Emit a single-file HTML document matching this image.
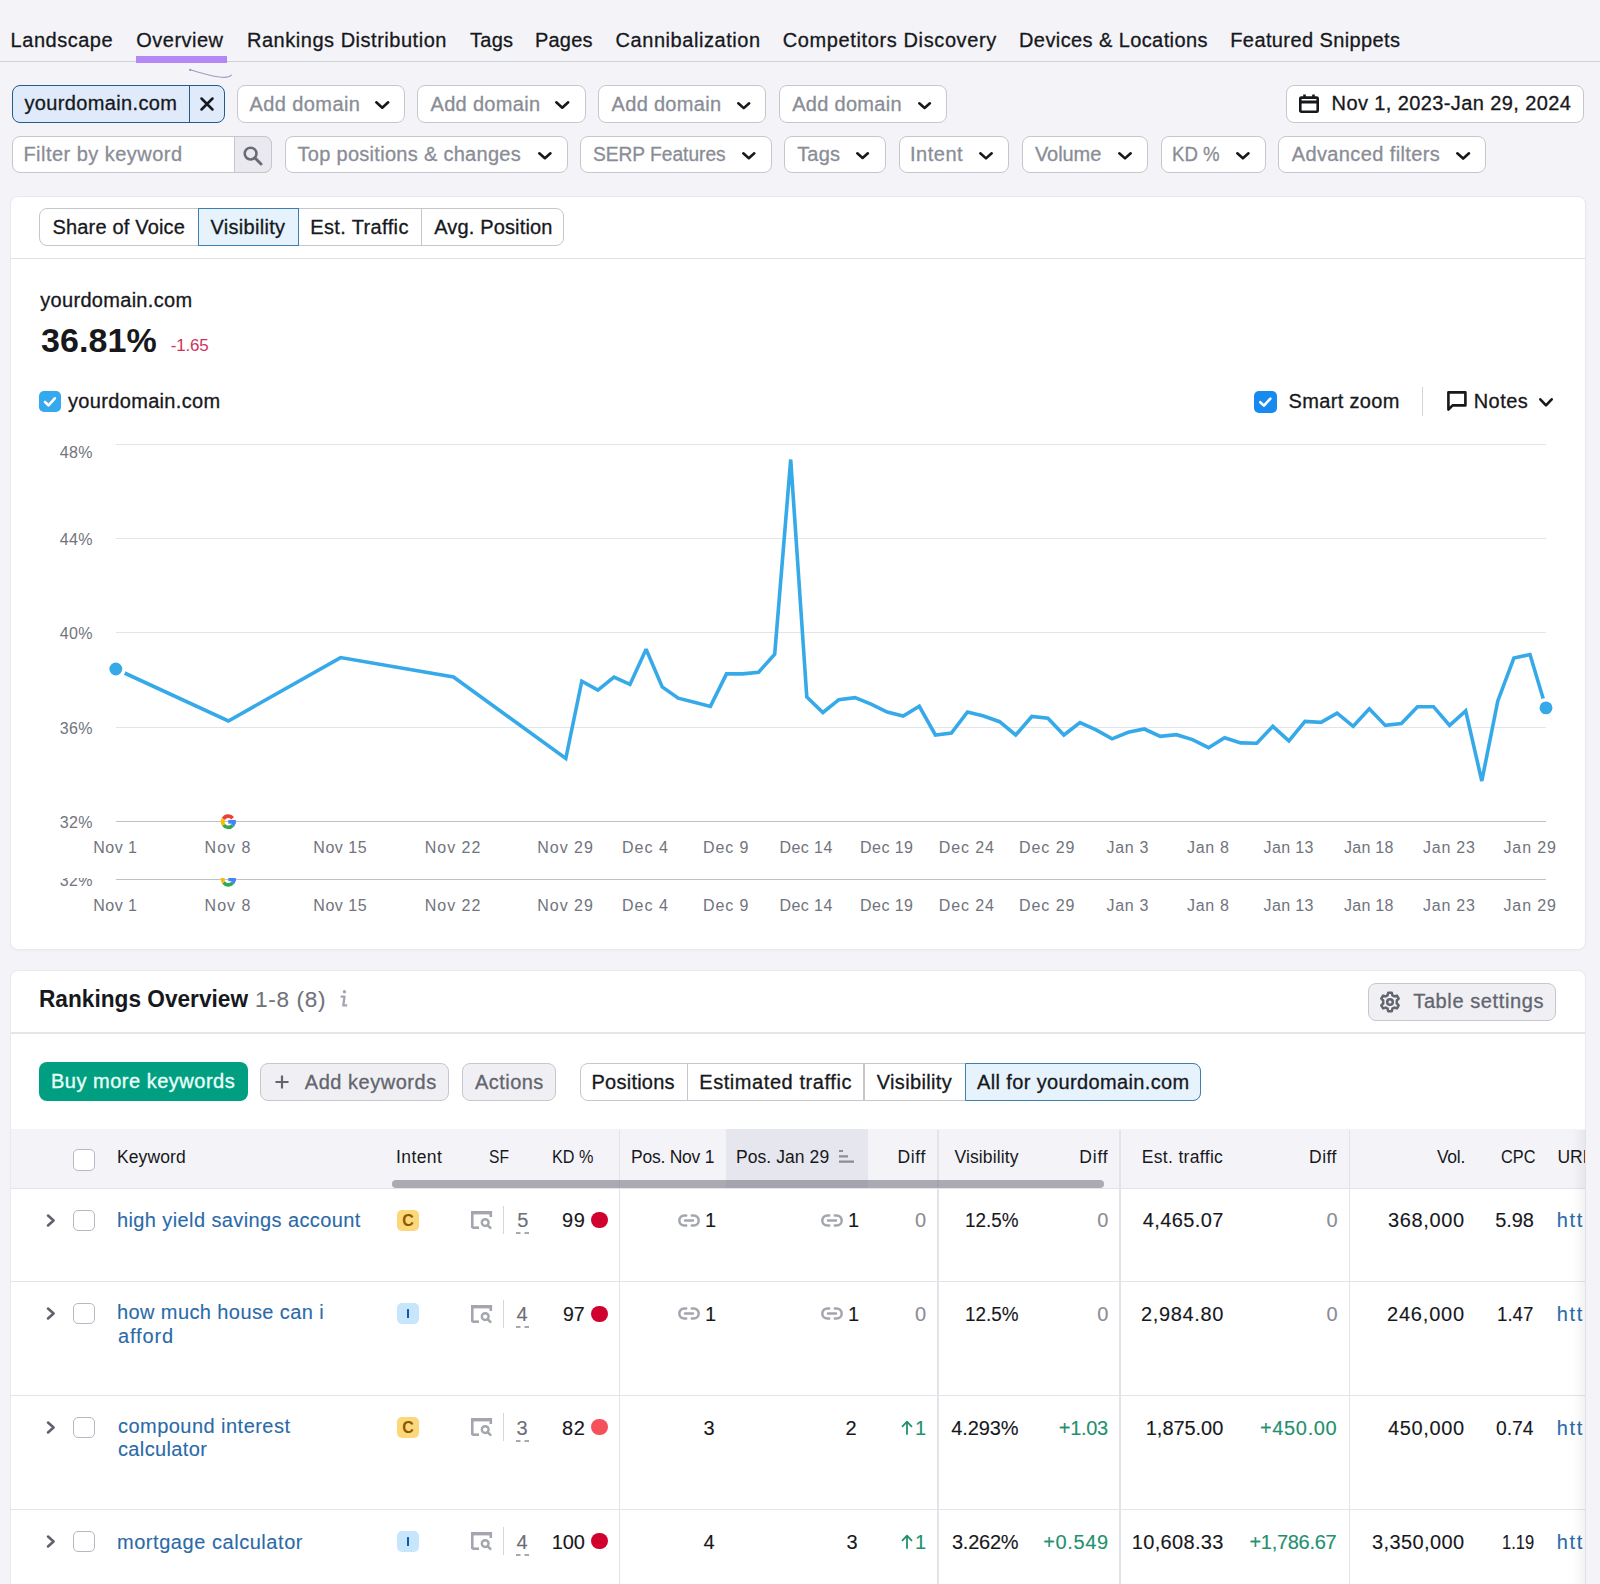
<!DOCTYPE html><html><head><meta charset="utf-8"><style>html,body{margin:0;padding:0;}</style></head><body style="position:relative;width:1600px;height:1584px;overflow:hidden;background:#f4f4f8;font-family:'Liberation Sans',sans-serif;"><div style="position:absolute;left:0.00px;top:60.50px;width:1600.00px;height:1.50px;box-sizing:border-box;background:#cfd1d8;"></div>
<div style="position:absolute;left:10.60px;top:30.30px;font-family:'Liberation Sans', sans-serif;font-size:20px;line-height:20px;font-weight:400;color:#17181c;white-space:nowrap;-webkit-text-stroke:0.3px #17181c;letter-spacing:0.520px;">Landscape</div>
<div style="position:absolute;left:136.30px;top:30.30px;font-family:'Liberation Sans', sans-serif;font-size:20px;line-height:20px;font-weight:400;color:#17181c;white-space:nowrap;-webkit-text-stroke:0.3px #17181c;letter-spacing:0.471px;">Overview</div>
<div style="position:absolute;left:247.00px;top:30.30px;font-family:'Liberation Sans', sans-serif;font-size:20px;line-height:20px;font-weight:400;color:#17181c;white-space:nowrap;-webkit-text-stroke:0.3px #17181c;letter-spacing:0.522px;">Rankings Distribution</div>
<div style="position:absolute;left:470.00px;top:30.30px;font-family:'Liberation Sans', sans-serif;font-size:20px;line-height:20px;font-weight:400;color:#17181c;white-space:nowrap;-webkit-text-stroke:0.3px #17181c;letter-spacing:0.251px;">Tags</div>
<div style="position:absolute;left:535.00px;top:30.30px;font-family:'Liberation Sans', sans-serif;font-size:20px;line-height:20px;font-weight:400;color:#17181c;white-space:nowrap;-webkit-text-stroke:0.3px #17181c;letter-spacing:0.198px;">Pages</div>
<div style="position:absolute;left:615.50px;top:30.30px;font-family:'Liberation Sans', sans-serif;font-size:20px;line-height:20px;font-weight:400;color:#17181c;white-space:nowrap;-webkit-text-stroke:0.3px #17181c;letter-spacing:0.562px;">Cannibalization</div>
<div style="position:absolute;left:782.75px;top:30.30px;font-family:'Liberation Sans', sans-serif;font-size:20px;line-height:20px;font-weight:400;color:#17181c;white-space:nowrap;-webkit-text-stroke:0.3px #17181c;letter-spacing:0.617px;">Competitors Discovery</div>
<div style="position:absolute;left:1019.00px;top:30.30px;font-family:'Liberation Sans', sans-serif;font-size:20px;line-height:20px;font-weight:400;color:#17181c;white-space:nowrap;-webkit-text-stroke:0.3px #17181c;letter-spacing:0.405px;">Devices &amp; Locations</div>
<div style="position:absolute;left:1230.25px;top:30.30px;font-family:'Liberation Sans', sans-serif;font-size:20px;line-height:20px;font-weight:400;color:#17181c;white-space:nowrap;-webkit-text-stroke:0.3px #17181c;letter-spacing:0.395px;">Featured Snippets</div>
<div style="position:absolute;left:136.00px;top:56.30px;width:90.60px;height:6.50px;box-sizing:border-box;background:#b387f5;"></div>
<svg style="position:absolute;left:0.00px;top:0.00px;overflow:visible;" width="1600" height="100" viewBox="0 0 1600 100"><path d="M190,69.8 C200,72.5 212,76.5 222,77.3 C227,77.6 230,76.8 231.4,75.2" fill="none" stroke="#a497c9" stroke-width="1.1" stroke-linecap="round"/><circle cx="190.2" cy="69.9" r="1.1" fill="#9a8fc0"/></svg>
<div style="position:absolute;left:11.50px;top:85.00px;width:213.00px;height:38.00px;box-sizing:border-box;background:#dfeafa;border:1.6px solid #245b8a;border-radius:8px;"></div>
<div style="position:absolute;left:188.80px;top:85.00px;width:1.60px;height:38.00px;box-sizing:border-box;background:#245b8a;"></div>
<div style="position:absolute;left:24.40px;top:92.60px;font-family:'Liberation Sans', sans-serif;font-size:20px;line-height:20px;font-weight:400;color:#17181c;white-space:nowrap;-webkit-text-stroke:0.3px #17181c;letter-spacing:0.359px;">yourdomain.com</div>
<svg style="position:absolute;left:199.70px;top:97.20px;overflow:visible;" width="14" height="14" viewBox="0 0 14 14"><path d="M1.5,1.5 L12.5,12.5 M12.5,1.5 L1.5,12.5" stroke="#17181c" stroke-width="2.5" stroke-linecap="round"/></svg>
<div style="position:absolute;left:236.50px;top:85.00px;width:168.00px;height:38.00px;box-sizing:border-box;background:#fff;border:1.5px solid #c6c7cc;border-radius:8px;"></div>
<div style="position:absolute;left:249.50px;top:93.50px;font-family:'Liberation Sans', sans-serif;font-size:20px;line-height:20px;font-weight:400;color:#8a8d96;white-space:nowrap;-webkit-text-stroke:0.3px #8a8d96;letter-spacing:0.404px;">Add domain</div>
<svg style="position:absolute;left:374.50px;top:101.41px;overflow:visible;" width="14.5" height="7.9750000000000005" viewBox="0 0 14.5 7.9750000000000005"><polyline points="1.30,1.30 7.25,6.68 13.20,1.30" fill="none" stroke="#17181c" stroke-width="2.6" stroke-linecap="round" stroke-linejoin="round"/></svg>
<div style="position:absolute;left:417.00px;top:85.00px;width:168.50px;height:38.00px;box-sizing:border-box;background:#fff;border:1.5px solid #c6c7cc;border-radius:8px;"></div>
<div style="position:absolute;left:430.50px;top:93.50px;font-family:'Liberation Sans', sans-serif;font-size:20px;line-height:20px;font-weight:400;color:#8a8d96;white-space:nowrap;-webkit-text-stroke:0.3px #8a8d96;letter-spacing:0.321px;">Add domain</div>
<svg style="position:absolute;left:555.00px;top:101.41px;overflow:visible;" width="14.5" height="7.9750000000000005" viewBox="0 0 14.5 7.9750000000000005"><polyline points="1.30,1.30 7.25,6.68 13.20,1.30" fill="none" stroke="#17181c" stroke-width="2.6" stroke-linecap="round" stroke-linejoin="round"/></svg>
<div style="position:absolute;left:598.00px;top:85.00px;width:168.30px;height:38.00px;box-sizing:border-box;background:#fff;border:1.5px solid #c6c7cc;border-radius:8px;"></div>
<div style="position:absolute;left:611.60px;top:93.50px;font-family:'Liberation Sans', sans-serif;font-size:20px;line-height:20px;font-weight:400;color:#8a8d96;white-space:nowrap;-webkit-text-stroke:0.3px #8a8d96;letter-spacing:0.298px;">Add domain</div>
<svg style="position:absolute;left:736.50px;top:101.69px;overflow:visible;" width="13.5" height="7.425000000000001" viewBox="0 0 13.5 7.425000000000001"><polyline points="1.30,1.30 6.75,6.13 12.20,1.30" fill="none" stroke="#17181c" stroke-width="2.6" stroke-linecap="round" stroke-linejoin="round"/></svg>
<div style="position:absolute;left:778.70px;top:85.00px;width:168.70px;height:38.00px;box-sizing:border-box;background:#fff;border:1.5px solid #c6c7cc;border-radius:8px;"></div>
<div style="position:absolute;left:792.20px;top:93.50px;font-family:'Liberation Sans', sans-serif;font-size:20px;line-height:20px;font-weight:400;color:#8a8d96;white-space:nowrap;-webkit-text-stroke:0.3px #8a8d96;letter-spacing:0.287px;">Add domain</div>
<svg style="position:absolute;left:917.60px;top:101.77px;overflow:visible;" width="13.199999999999932" height="7.259999999999963" viewBox="0 0 13.199999999999932 7.259999999999963"><polyline points="1.30,1.30 6.60,5.96 11.90,1.30" fill="none" stroke="#17181c" stroke-width="2.6" stroke-linecap="round" stroke-linejoin="round"/></svg>
<div style="position:absolute;left:1286.00px;top:85.20px;width:297.80px;height:37.40px;box-sizing:border-box;background:#fff;border:1.5px solid #c6c7cc;border-radius:8px;"></div>
<svg style="position:absolute;left:1299.00px;top:93.90px;overflow:visible;" width="20" height="19" viewBox="0 0 20 19"><rect x="1.3" y="3.6" width="17.4" height="14.1" rx="1" fill="none" stroke="#17181c" stroke-width="2.6"/><rect x="1.3" y="6.5" width="17.4" height="3" fill="#17181c"/><path d="M5.5,0.5 V4 M14.5,0.5 V4" stroke="#17181c" stroke-width="2.6"/></svg>
<div style="position:absolute;left:1331.60px;top:93.30px;font-family:'Liberation Sans', sans-serif;font-size:20px;line-height:20px;font-weight:400;color:#17181c;white-space:nowrap;-webkit-text-stroke:0.3px #17181c;letter-spacing:0.394px;">Nov 1, 2023-Jan 29, 2024</div>
<div style="position:absolute;left:11.50px;top:135.70px;width:260.50px;height:37.30px;box-sizing:border-box;background:#fff;border:1.5px solid #c6c7cc;border-radius:8px;"></div>
<div style="position:absolute;left:233.80px;top:135.70px;width:38.20px;height:37.30px;box-sizing:border-box;background:#e9e9ef;border:1.5px solid #c6c7cc;border-radius:0 8px 8px 0;"></div>
<div style="position:absolute;left:23.40px;top:144.00px;font-family:'Liberation Sans', sans-serif;font-size:20px;line-height:20px;font-weight:400;color:#8a8d96;white-space:nowrap;-webkit-text-stroke:0.3px #8a8d96;letter-spacing:0.473px;">Filter by keyword</div>
<svg style="position:absolute;left:243.20px;top:146.00px;overflow:visible;" width="20" height="19" viewBox="0 0 20 19"><circle cx="7.6" cy="7.6" r="5.9" fill="none" stroke="#6a6d77" stroke-width="2.6"/><path d="M11.8,11.8 L18,18" stroke="#6a6d77" stroke-width="3" stroke-linecap="round"/></svg>
<div style="position:absolute;left:284.50px;top:135.60px;width:283.00px;height:37.40px;box-sizing:border-box;background:#fff;border:1.5px solid #c6c7cc;border-radius:8px;"></div>
<div style="position:absolute;left:297.50px;top:144.30px;font-family:'Liberation Sans', sans-serif;font-size:20px;line-height:20px;font-weight:400;color:#8a8d96;white-space:nowrap;-webkit-text-stroke:0.3px #8a8d96;letter-spacing:0.293px;">Top positions &amp; changes</div>
<svg style="position:absolute;left:537.50px;top:152.22px;overflow:visible;" width="13.75" height="7.562500000000001" viewBox="0 0 13.75 7.562500000000001"><polyline points="1.30,1.30 6.88,6.26 12.45,1.30" fill="none" stroke="#17181c" stroke-width="2.6" stroke-linecap="round" stroke-linejoin="round"/></svg>
<div style="position:absolute;left:579.80px;top:135.60px;width:192.20px;height:37.40px;box-sizing:border-box;background:#fff;border:1.5px solid #c6c7cc;border-radius:8px;"></div>
<div style="position:absolute;left:592.50px;top:144.30px;font-family:'Liberation Sans', sans-serif;font-size:20px;line-height:20px;font-weight:400;color:#8a8d96;white-space:nowrap;-webkit-text-stroke:0.3px #8a8d96;transform:scaleX(0.9572);transform-origin:0 0;">SERP Features</div>
<svg style="position:absolute;left:742.00px;top:152.26px;overflow:visible;" width="13.600000000000023" height="7.480000000000013" viewBox="0 0 13.600000000000023 7.480000000000013"><polyline points="1.30,1.30 6.80,6.18 12.30,1.30" fill="none" stroke="#17181c" stroke-width="2.6" stroke-linecap="round" stroke-linejoin="round"/></svg>
<div style="position:absolute;left:784.30px;top:135.60px;width:101.70px;height:37.40px;box-sizing:border-box;background:#fff;border:1.5px solid #c6c7cc;border-radius:8px;"></div>
<div style="position:absolute;left:797.20px;top:144.30px;font-family:'Liberation Sans', sans-serif;font-size:20px;line-height:20px;font-weight:400;color:#8a8d96;white-space:nowrap;-webkit-text-stroke:0.3px #8a8d96;letter-spacing:0.185px;">Tags</div>
<svg style="position:absolute;left:856.30px;top:152.37px;overflow:visible;" width="13.200000000000045" height="7.2600000000000255" viewBox="0 0 13.200000000000045 7.2600000000000255"><polyline points="1.30,1.30 6.60,5.96 11.90,1.30" fill="none" stroke="#17181c" stroke-width="2.6" stroke-linecap="round" stroke-linejoin="round"/></svg>
<div style="position:absolute;left:898.50px;top:135.60px;width:110.80px;height:37.40px;box-sizing:border-box;background:#fff;border:1.5px solid #c6c7cc;border-radius:8px;"></div>
<div style="position:absolute;left:910.00px;top:144.30px;font-family:'Liberation Sans', sans-serif;font-size:20px;line-height:20px;font-weight:400;color:#8a8d96;white-space:nowrap;-webkit-text-stroke:0.3px #8a8d96;letter-spacing:0.524px;">Intent</div>
<svg style="position:absolute;left:979.20px;top:152.15px;overflow:visible;" width="14.0" height="7.700000000000001" viewBox="0 0 14.0 7.700000000000001"><polyline points="1.30,1.30 7.00,6.40 12.70,1.30" fill="none" stroke="#17181c" stroke-width="2.6" stroke-linecap="round" stroke-linejoin="round"/></svg>
<div style="position:absolute;left:1021.70px;top:135.60px;width:126.00px;height:37.40px;box-sizing:border-box;background:#fff;border:1.5px solid #c6c7cc;border-radius:8px;"></div>
<div style="position:absolute;left:1034.90px;top:144.30px;font-family:'Liberation Sans', sans-serif;font-size:20px;line-height:20px;font-weight:400;color:#8a8d96;white-space:nowrap;-webkit-text-stroke:0.3px #8a8d96;letter-spacing:-0.057px;">Volume</div>
<svg style="position:absolute;left:1118.00px;top:152.15px;overflow:visible;" width="14" height="7.700000000000001" viewBox="0 0 14 7.700000000000001"><polyline points="1.30,1.30 7.00,6.40 12.70,1.30" fill="none" stroke="#17181c" stroke-width="2.6" stroke-linecap="round" stroke-linejoin="round"/></svg>
<div style="position:absolute;left:1160.50px;top:135.60px;width:105.30px;height:37.40px;box-sizing:border-box;background:#fff;border:1.5px solid #c6c7cc;border-radius:8px;"></div>
<div style="position:absolute;left:1171.57px;top:144.30px;font-family:'Liberation Sans', sans-serif;font-size:20px;line-height:20px;font-weight:400;color:#8a8d96;white-space:nowrap;-webkit-text-stroke:0.3px #8a8d96;transform:scaleX(0.9317);transform-origin:0 0;">KD %</div>
<svg style="position:absolute;left:1236.20px;top:152.21px;overflow:visible;" width="13.799999999999955" height="7.589999999999976" viewBox="0 0 13.799999999999955 7.589999999999976"><polyline points="1.30,1.30 6.90,6.29 12.50,1.30" fill="none" stroke="#17181c" stroke-width="2.6" stroke-linecap="round" stroke-linejoin="round"/></svg>
<div style="position:absolute;left:1278.00px;top:135.60px;width:208.00px;height:37.40px;box-sizing:border-box;background:#fff;border:1.5px solid #c6c7cc;border-radius:8px;"></div>
<div style="position:absolute;left:1291.70px;top:144.30px;font-family:'Liberation Sans', sans-serif;font-size:20px;line-height:20px;font-weight:400;color:#8a8d96;white-space:nowrap;-webkit-text-stroke:0.3px #8a8d96;letter-spacing:0.387px;">Advanced filters</div>
<svg style="position:absolute;left:1456.30px;top:152.07px;overflow:visible;" width="14.299999999999955" height="7.864999999999975" viewBox="0 0 14.299999999999955 7.864999999999975"><polyline points="1.30,1.30 7.15,6.56 13.00,1.30" fill="none" stroke="#17181c" stroke-width="2.6" stroke-linecap="round" stroke-linejoin="round"/></svg>
<div style="position:absolute;left:11.00px;top:196.90px;width:1573.80px;height:751.80px;box-sizing:border-box;background:#fff;border-radius:7px;box-shadow:0 0 0 1px #e9eaef, 0 1px 3px rgba(0,0,0,0.06);"></div>
<div style="position:absolute;left:11.00px;top:257.70px;width:1573.80px;height:1.40px;box-sizing:border-box;background:#dfe0e5;"></div>
<div style="position:absolute;left:39.40px;top:208.00px;width:524.40px;height:38.00px;box-sizing:border-box;background:#fff;border:1.5px solid #c6c7cc;border-radius:8px;"></div>
<div style="position:absolute;left:421.00px;top:208.00px;width:1.30px;height:38.00px;box-sizing:border-box;background:#c6c7cc;"></div>
<div style="position:absolute;left:197.50px;top:208.00px;width:101.30px;height:38.00px;box-sizing:border-box;background:#e6f3fd;border:1.6px solid #3d7fae;"></div>
<div style="position:absolute;left:52.50px;top:217.00px;font-family:'Liberation Sans', sans-serif;font-size:20px;line-height:20px;font-weight:400;color:#17181c;white-space:nowrap;-webkit-text-stroke:0.3px #17181c;letter-spacing:0.176px;">Share of Voice</div>
<div style="position:absolute;left:210.50px;top:216.80px;font-family:'Liberation Sans', sans-serif;font-size:20px;line-height:20px;font-weight:400;color:#17181c;white-space:nowrap;-webkit-text-stroke:0.3px #17181c;letter-spacing:0.292px;">Visibility</div>
<div style="position:absolute;left:310.25px;top:216.80px;font-family:'Liberation Sans', sans-serif;font-size:20px;line-height:20px;font-weight:400;color:#17181c;white-space:nowrap;-webkit-text-stroke:0.3px #17181c;letter-spacing:0.367px;">Est. Traffic</div>
<div style="position:absolute;left:434.25px;top:216.80px;font-family:'Liberation Sans', sans-serif;font-size:20px;line-height:20px;font-weight:400;color:#17181c;white-space:nowrap;-webkit-text-stroke:0.3px #17181c;letter-spacing:0.146px;">Avg. Position</div>
<div style="position:absolute;left:40.25px;top:290.20px;font-family:'Liberation Sans', sans-serif;font-size:20px;line-height:20px;font-weight:400;color:#17181c;white-space:nowrap;-webkit-text-stroke:0.3px #17181c;letter-spacing:0.305px;">yourdomain.com</div>
<div style="position:absolute;left:41.00px;top:322.80px;font-family:'Liberation Sans', sans-serif;font-size:34px;line-height:34px;font-weight:700;color:#17181c;white-space:nowrap;letter-spacing:0.083px;">36.81%</div>
<div style="position:absolute;left:170.75px;top:337.00px;font-family:'Liberation Sans', sans-serif;font-size:17px;line-height:17px;font-weight:400;color:#d0335a;white-space:nowrap;letter-spacing:-0.198px;">-1.65</div>
<div style="position:absolute;left:39.20px;top:391.20px;width:21.60px;height:21.00px;box-sizing:border-box;background:#35a9ef;border-radius:5px;"></div>
<svg style="position:absolute;left:39.20px;top:391.20px;overflow:visible;" width="21.6" height="21" viewBox="0 0 21.6 21"><polyline points="6,11 9.5,14.3 15.8,7.3" fill="none" stroke="#fff" stroke-width="2.6" stroke-linecap="round" stroke-linejoin="round"/></svg>
<div style="position:absolute;left:68.00px;top:390.70px;font-family:'Liberation Sans', sans-serif;font-size:20px;line-height:20px;font-weight:400;color:#17181c;white-space:nowrap;-webkit-text-stroke:0.3px #17181c;letter-spacing:0.332px;">yourdomain.com</div>
<div style="position:absolute;left:1254.00px;top:391.10px;width:22.70px;height:21.60px;box-sizing:border-box;background:#178af0;border-radius:5px;"></div>
<svg style="position:absolute;left:1254.00px;top:391.10px;overflow:visible;" width="22.7" height="21.6" viewBox="0 0 22.7 21.6"><polyline points="6.3,11.2 9.9,14.6 16.4,7.6" fill="none" stroke="#fff" stroke-width="2.6" stroke-linecap="round" stroke-linejoin="round"/></svg>
<div style="position:absolute;left:1288.50px;top:391.00px;font-family:'Liberation Sans', sans-serif;font-size:20px;line-height:20px;font-weight:400;color:#17181c;white-space:nowrap;-webkit-text-stroke:0.3px #17181c;letter-spacing:0.351px;">Smart zoom</div>
<div style="position:absolute;left:1422.00px;top:387.40px;width:1.30px;height:28.90px;box-sizing:border-box;background:#d4d6dc;"></div>
<svg style="position:absolute;left:1446.90px;top:391.00px;overflow:visible;" width="20" height="20" viewBox="0 0 20 20"><path d="M1.4,18.6 V1.4 H18.4 V14.4 H5.6 Z" fill="none" stroke="#17181c" stroke-width="2.6" stroke-linejoin="round"/></svg>
<div style="position:absolute;left:1473.70px;top:391.00px;font-family:'Liberation Sans', sans-serif;font-size:20px;line-height:20px;font-weight:400;color:#17181c;white-space:nowrap;-webkit-text-stroke:0.3px #17181c;letter-spacing:0.451px;">Notes</div>
<svg style="position:absolute;left:1538.70px;top:398.10px;overflow:visible;" width="14" height="9" viewBox="0 0 14 9"><polyline points="1.3,1.3 7,7.4 12.7,1.3" fill="none" stroke="#17181c" stroke-width="2.6" stroke-linecap="round" stroke-linejoin="round"/></svg>
<div style="position:absolute;left:116px;top:443.8px;width:1430px;height:1.3px;background:#e3e4ea;"></div>
<div style="position:absolute;left:59.80px;top:445.30px;font-family:'Liberation Sans', sans-serif;font-size:16px;line-height:16px;font-weight:400;color:#71747d;white-space:nowrap;letter-spacing:0.352px;">48%</div>
<div style="position:absolute;left:116px;top:538.0px;width:1430px;height:1.3px;background:#e3e4ea;"></div>
<div style="position:absolute;left:59.80px;top:532.20px;font-family:'Liberation Sans', sans-serif;font-size:16px;line-height:16px;font-weight:400;color:#71747d;white-space:nowrap;letter-spacing:0.352px;">44%</div>
<div style="position:absolute;left:116px;top:632.2px;width:1430px;height:1.3px;background:#e3e4ea;"></div>
<div style="position:absolute;left:59.80px;top:626.40px;font-family:'Liberation Sans', sans-serif;font-size:16px;line-height:16px;font-weight:400;color:#71747d;white-space:nowrap;letter-spacing:0.352px;">40%</div>
<div style="position:absolute;left:116px;top:726.5px;width:1430px;height:1.3px;background:#e3e4ea;"></div>
<div style="position:absolute;left:59.80px;top:720.60px;font-family:'Liberation Sans', sans-serif;font-size:16px;line-height:16px;font-weight:400;color:#71747d;white-space:nowrap;letter-spacing:0.352px;">36%</div>
<div style="position:absolute;left:116px;top:821px;width:1430px;height:1.4px;background:#bfc1c8;"></div>
<div style="position:absolute;left:59.80px;top:815.00px;font-family:'Liberation Sans', sans-serif;font-size:16px;line-height:16px;font-weight:400;color:#71747d;white-space:nowrap;letter-spacing:0.352px;">32%</div>
<svg style="position:absolute;left:0;top:0;overflow:visible" width="1600" height="1584"><path d="M232.61,818.18 A5.62,5.62 0 0 0 223.43,818.99" fill="none" stroke="#ea4335" stroke-width="3.75"/><path d="M223.43,818.99 A5.62,5.62 0 0 0 223.69,825.03" fill="none" stroke="#fbbc05" stroke-width="3.75"/><path d="M223.69,825.03 A5.62,5.62 0 0 0 232.61,825.42" fill="none" stroke="#34a853" stroke-width="3.75"/><path d="M232.61,825.42 A5.62,5.62 0 0 0 233.93,821.80" fill="none" stroke="#4285f4" stroke-width="3.75"/><rect x="228.30" y="819.92" width="7.50" height="3.75" fill="#4285f4"/></svg>
<div style="position:absolute;left:93.25px;top:840.30px;font-family:'Liberation Sans', sans-serif;font-size:16px;line-height:16px;font-weight:400;color:#71747d;white-space:nowrap;letter-spacing:0.463px;">Nov 1</div>
<div style="position:absolute;left:204.60px;top:840.30px;font-family:'Liberation Sans', sans-serif;font-size:16px;line-height:16px;font-weight:400;color:#71747d;white-space:nowrap;letter-spacing:1.025px;">Nov 8</div>
<div style="position:absolute;left:313.30px;top:840.30px;font-family:'Liberation Sans', sans-serif;font-size:16px;line-height:16px;font-weight:400;color:#71747d;white-space:nowrap;letter-spacing:0.541px;">Nov 15</div>
<div style="position:absolute;left:424.70px;top:840.30px;font-family:'Liberation Sans', sans-serif;font-size:16px;line-height:16px;font-weight:400;color:#71747d;white-space:nowrap;letter-spacing:1.001px;">Nov 22</div>
<div style="position:absolute;left:537.20px;top:840.30px;font-family:'Liberation Sans', sans-serif;font-size:16px;line-height:16px;font-weight:400;color:#71747d;white-space:nowrap;letter-spacing:1.001px;">Nov 29</div>
<div style="position:absolute;left:622.00px;top:840.30px;font-family:'Liberation Sans', sans-serif;font-size:16px;line-height:16px;font-weight:400;color:#71747d;white-space:nowrap;letter-spacing:1.025px;">Dec 4</div>
<div style="position:absolute;left:703.00px;top:840.30px;font-family:'Liberation Sans', sans-serif;font-size:16px;line-height:16px;font-weight:400;color:#71747d;white-space:nowrap;letter-spacing:0.875px;">Dec 9</div>
<div style="position:absolute;left:779.50px;top:840.30px;font-family:'Liberation Sans', sans-serif;font-size:16px;line-height:16px;font-weight:400;color:#71747d;white-space:nowrap;letter-spacing:0.421px;">Dec 14</div>
<div style="position:absolute;left:860.00px;top:840.30px;font-family:'Liberation Sans', sans-serif;font-size:16px;line-height:16px;font-weight:400;color:#71747d;white-space:nowrap;letter-spacing:0.461px;">Dec 19</div>
<div style="position:absolute;left:938.80px;top:840.30px;font-family:'Liberation Sans', sans-serif;font-size:16px;line-height:16px;font-weight:400;color:#71747d;white-space:nowrap;letter-spacing:0.901px;">Dec 24</div>
<div style="position:absolute;left:1018.90px;top:840.30px;font-family:'Liberation Sans', sans-serif;font-size:16px;line-height:16px;font-weight:400;color:#71747d;white-space:nowrap;letter-spacing:0.961px;">Dec 29</div>
<div style="position:absolute;left:1106.60px;top:840.30px;font-family:'Liberation Sans', sans-serif;font-size:16px;line-height:16px;font-weight:400;color:#71747d;white-space:nowrap;letter-spacing:0.689px;">Jan 3</div>
<div style="position:absolute;left:1187.00px;top:840.30px;font-family:'Liberation Sans', sans-serif;font-size:16px;line-height:16px;font-weight:400;color:#71747d;white-space:nowrap;letter-spacing:0.689px;">Jan 8</div>
<div style="position:absolute;left:1263.50px;top:840.30px;font-family:'Liberation Sans', sans-serif;font-size:16px;line-height:16px;font-weight:400;color:#71747d;white-space:nowrap;letter-spacing:0.392px;">Jan 13</div>
<div style="position:absolute;left:1344.00px;top:840.30px;font-family:'Liberation Sans', sans-serif;font-size:16px;line-height:16px;font-weight:400;color:#71747d;white-space:nowrap;letter-spacing:0.252px;">Jan 18</div>
<div style="position:absolute;left:1423.10px;top:840.30px;font-family:'Liberation Sans', sans-serif;font-size:16px;line-height:16px;font-weight:400;color:#71747d;white-space:nowrap;letter-spacing:0.752px;">Jan 23</div>
<div style="position:absolute;left:1503.50px;top:840.30px;font-family:'Liberation Sans', sans-serif;font-size:16px;line-height:16px;font-weight:400;color:#71747d;white-space:nowrap;letter-spacing:0.872px;">Jan 29</div>
<div style="position:absolute;left:0;top:877.5px;width:1600px;height:70px;overflow:hidden;"><div style="position:absolute;left:0;top:-877.5px;width:1600px;height:1584px;">
<div style="position:absolute;left:116px;top:878.5px;width:1430px;height:1.4px;background:#bfc1c8;"></div>
<div style="position:absolute;left:59.80px;top:872.50px;font-family:'Liberation Sans', sans-serif;font-size:16px;line-height:16px;font-weight:400;color:#71747d;white-space:nowrap;letter-spacing:0.352px;">32%</div>
<svg style="position:absolute;left:0;top:0;overflow:visible" width="1600" height="1584"><path d="M232.61,875.68 A5.62,5.62 0 0 0 223.43,876.49" fill="none" stroke="#ea4335" stroke-width="3.75"/><path d="M223.43,876.49 A5.62,5.62 0 0 0 223.69,882.53" fill="none" stroke="#fbbc05" stroke-width="3.75"/><path d="M223.69,882.53 A5.62,5.62 0 0 0 232.61,882.92" fill="none" stroke="#34a853" stroke-width="3.75"/><path d="M232.61,882.92 A5.62,5.62 0 0 0 233.93,879.30" fill="none" stroke="#4285f4" stroke-width="3.75"/><rect x="228.30" y="877.42" width="7.50" height="3.75" fill="#4285f4"/></svg>
<div style="position:absolute;left:93.25px;top:897.80px;font-family:'Liberation Sans', sans-serif;font-size:16px;line-height:16px;font-weight:400;color:#71747d;white-space:nowrap;letter-spacing:0.463px;">Nov 1</div>
<div style="position:absolute;left:204.60px;top:897.80px;font-family:'Liberation Sans', sans-serif;font-size:16px;line-height:16px;font-weight:400;color:#71747d;white-space:nowrap;letter-spacing:1.025px;">Nov 8</div>
<div style="position:absolute;left:313.30px;top:897.80px;font-family:'Liberation Sans', sans-serif;font-size:16px;line-height:16px;font-weight:400;color:#71747d;white-space:nowrap;letter-spacing:0.541px;">Nov 15</div>
<div style="position:absolute;left:424.70px;top:897.80px;font-family:'Liberation Sans', sans-serif;font-size:16px;line-height:16px;font-weight:400;color:#71747d;white-space:nowrap;letter-spacing:1.001px;">Nov 22</div>
<div style="position:absolute;left:537.20px;top:897.80px;font-family:'Liberation Sans', sans-serif;font-size:16px;line-height:16px;font-weight:400;color:#71747d;white-space:nowrap;letter-spacing:1.001px;">Nov 29</div>
<div style="position:absolute;left:622.00px;top:897.80px;font-family:'Liberation Sans', sans-serif;font-size:16px;line-height:16px;font-weight:400;color:#71747d;white-space:nowrap;letter-spacing:1.025px;">Dec 4</div>
<div style="position:absolute;left:703.00px;top:897.80px;font-family:'Liberation Sans', sans-serif;font-size:16px;line-height:16px;font-weight:400;color:#71747d;white-space:nowrap;letter-spacing:0.875px;">Dec 9</div>
<div style="position:absolute;left:779.50px;top:897.80px;font-family:'Liberation Sans', sans-serif;font-size:16px;line-height:16px;font-weight:400;color:#71747d;white-space:nowrap;letter-spacing:0.421px;">Dec 14</div>
<div style="position:absolute;left:860.00px;top:897.80px;font-family:'Liberation Sans', sans-serif;font-size:16px;line-height:16px;font-weight:400;color:#71747d;white-space:nowrap;letter-spacing:0.461px;">Dec 19</div>
<div style="position:absolute;left:938.80px;top:897.80px;font-family:'Liberation Sans', sans-serif;font-size:16px;line-height:16px;font-weight:400;color:#71747d;white-space:nowrap;letter-spacing:0.901px;">Dec 24</div>
<div style="position:absolute;left:1018.90px;top:897.80px;font-family:'Liberation Sans', sans-serif;font-size:16px;line-height:16px;font-weight:400;color:#71747d;white-space:nowrap;letter-spacing:0.961px;">Dec 29</div>
<div style="position:absolute;left:1106.60px;top:897.80px;font-family:'Liberation Sans', sans-serif;font-size:16px;line-height:16px;font-weight:400;color:#71747d;white-space:nowrap;letter-spacing:0.689px;">Jan 3</div>
<div style="position:absolute;left:1187.00px;top:897.80px;font-family:'Liberation Sans', sans-serif;font-size:16px;line-height:16px;font-weight:400;color:#71747d;white-space:nowrap;letter-spacing:0.689px;">Jan 8</div>
<div style="position:absolute;left:1263.50px;top:897.80px;font-family:'Liberation Sans', sans-serif;font-size:16px;line-height:16px;font-weight:400;color:#71747d;white-space:nowrap;letter-spacing:0.392px;">Jan 13</div>
<div style="position:absolute;left:1344.00px;top:897.80px;font-family:'Liberation Sans', sans-serif;font-size:16px;line-height:16px;font-weight:400;color:#71747d;white-space:nowrap;letter-spacing:0.252px;">Jan 18</div>
<div style="position:absolute;left:1423.10px;top:897.80px;font-family:'Liberation Sans', sans-serif;font-size:16px;line-height:16px;font-weight:400;color:#71747d;white-space:nowrap;letter-spacing:0.752px;">Jan 23</div>
<div style="position:absolute;left:1503.50px;top:897.80px;font-family:'Liberation Sans', sans-serif;font-size:16px;line-height:16px;font-weight:400;color:#71747d;white-space:nowrap;letter-spacing:0.872px;">Jan 29</div>
</div></div>
<svg style="position:absolute;left:0.00px;top:0.00px;overflow:visible;" width="1600" height="1584" viewBox="0 0 1600 1584"><polyline points="115.8,669.0 228.4,721.0 340.6,657.6 453.5,677.0 565.8,758.5 581.8,681.2 597.9,690.1 614.0,677.1 630.0,684.4 646.1,649.2 662.2,686.9 678.2,698.2 694.3,702.3 710.4,706.4 726.5,673.9 742.5,673.9 758.6,672.2 774.7,654.2 790.7,459.5 806.8,697.0 822.9,712.5 838.9,699.7 855.0,697.7 871.1,704.2 887.2,712.0 903.2,716.0 919.3,706.3 935.4,735.0 951.4,733.1 967.5,712.0 983.6,716.0 999.6,721.7 1015.7,735.0 1031.8,716.5 1047.9,718.3 1063.9,735.0 1080.0,722.6 1096.1,729.9 1112.1,738.8 1128.2,732.3 1144.3,729.0 1160.3,736.4 1176.4,734.7 1192.5,739.6 1208.6,747.7 1224.6,737.7 1240.7,742.9 1256.8,743.2 1272.8,726.3 1288.9,740.8 1305.0,721.4 1321.0,722.4 1337.1,713.1 1353.2,726.3 1369.3,708.8 1385.3,725.4 1401.4,723.6 1417.5,706.7 1433.5,706.7 1449.6,725.4 1465.7,710.9 1481.8,781.0 1497.8,700.9 1513.9,658.0 1530.0,654.5 1546.0,707.9" fill="none" stroke="#36aae9" stroke-width="3.6" stroke-linejoin="miter" stroke-miterlimit="2"/><circle cx="115.8" cy="669" r="8.2" fill="#36aae9" stroke="#fff" stroke-width="3.5"/><circle cx="1546.0" cy="707.9" r="8.2" fill="#36aae9" stroke="#fff" stroke-width="3.5"/></svg>
<div style="position:absolute;left:11.00px;top:971.00px;width:1574.20px;height:629.00px;box-sizing:border-box;background:#fff;border-radius:7px 7px 0 0;box-shadow:0 0 0 1px #e9eaef, 0 1px 3px rgba(0,0,0,0.06);"></div>
<div style="position:absolute;left:11.00px;top:1032.40px;width:1574.00px;height:1.40px;box-sizing:border-box;background:#e4e5ea;"></div>
<div style="position:absolute;left:39.04px;top:988.00px;font-family:'Liberation Sans', sans-serif;font-size:23.5px;line-height:23.5px;font-weight:700;color:#17181c;white-space:nowrap;transform:scaleX(0.9641);transform-origin:0 0;">Rankings Overview</div>
<div style="position:absolute;left:255.00px;top:989.00px;font-family:'Liberation Sans', sans-serif;font-size:22.5px;line-height:22.5px;font-weight:400;color:#6f727b;white-space:nowrap;letter-spacing:0.704px;-webkit-text-stroke:0.1px #6f727b;">1-8 (8)</div>
<svg style="position:absolute;left:0.00px;top:0.00px;overflow:visible;" width="1600" height="1584" viewBox="0 0 1600 1584"><circle cx="344.4" cy="991.7" r="1.7" fill="#a3a6ae"/><path d="M340.6,996.6 H344.5 L343.3,1005.3 H347.2" fill="none" stroke="#a3a6ae" stroke-width="2.3" stroke-linejoin="round"/></svg>
<div style="position:absolute;left:1368.00px;top:983.00px;width:188.30px;height:38.00px;box-sizing:border-box;background:#f0f0f4;border:1.5px solid #c6c7cc;border-radius:8px;"></div>
<svg style="position:absolute;left:1378.60px;top:990.80px;overflow:visible;" width="22" height="22" viewBox="0 0 22 22"><g fill="none" stroke="#62656e" stroke-width="2.5"><circle cx="11" cy="11" r="2.8"/><path d="M9.2,1.8 H12.8 L13.4,4.3 L15.4,5.4 L17.9,4.6 L19.7,7.7 L17.8,9.5 V12.5 L19.7,14.3 L17.9,17.4 L15.4,16.6 L13.4,17.7 L12.8,20.2 H9.2 L8.6,17.7 L6.6,16.6 L4.1,17.4 L2.3,14.3 L4.2,12.5 V9.5 L2.3,7.7 L4.1,4.6 L6.6,5.4 L8.6,4.3 Z" stroke-linejoin="round"/></g></svg>
<div style="position:absolute;left:1413.30px;top:990.90px;font-family:'Liberation Sans', sans-serif;font-size:20px;line-height:20px;font-weight:400;color:#62656e;white-space:nowrap;-webkit-text-stroke:0.3px #62656e;letter-spacing:0.600px;">Table settings</div>
<div style="position:absolute;left:39.00px;top:1062.20px;width:208.50px;height:38.40px;box-sizing:border-box;background:#009f81;border-radius:8px;"></div>
<div style="position:absolute;left:51.00px;top:1071.40px;font-family:'Liberation Sans', sans-serif;font-size:20px;line-height:20px;font-weight:400;color:#e9fff8;white-space:nowrap;letter-spacing:0.508px;-webkit-text-stroke:0.35px #e9fff8;">Buy more keywords</div>
<div style="position:absolute;left:259.80px;top:1062.70px;width:189.20px;height:37.90px;box-sizing:border-box;background:#f0f0f4;border:1.5px solid #c6c7cc;border-radius:8px;"></div>
<svg style="position:absolute;left:274.70px;top:1074.50px;overflow:visible;" width="14" height="14" viewBox="0 0 14 14"><path d="M7,0.5 V13.5 M0.5,7 H13.5" stroke="#62656e" stroke-width="2.2"/></svg>
<div style="position:absolute;left:304.80px;top:1071.60px;font-family:'Liberation Sans', sans-serif;font-size:20px;line-height:20px;font-weight:400;color:#62656e;white-space:nowrap;-webkit-text-stroke:0.3px #62656e;letter-spacing:0.526px;">Add keywords</div>
<div style="position:absolute;left:461.50px;top:1062.70px;width:94.50px;height:37.90px;box-sizing:border-box;background:#f0f0f4;border:1.5px solid #c6c7cc;border-radius:8px;"></div>
<div style="position:absolute;left:475.00px;top:1071.60px;font-family:'Liberation Sans', sans-serif;font-size:20px;line-height:20px;font-weight:400;color:#62656e;white-space:nowrap;-webkit-text-stroke:0.3px #62656e;letter-spacing:0.452px;">Actions</div>
<div style="position:absolute;left:579.60px;top:1062.50px;width:621.80px;height:38.10px;box-sizing:border-box;background:#fff;border:1.5px solid #c6c7cc;border-radius:8px;"></div>
<div style="position:absolute;left:686.80px;top:1062.50px;width:1.30px;height:38.10px;box-sizing:border-box;background:#c6c7cc;"></div>
<div style="position:absolute;left:863.40px;top:1062.50px;width:1.30px;height:38.10px;box-sizing:border-box;background:#c6c7cc;"></div>
<div style="position:absolute;left:964.50px;top:1062.50px;width:236.90px;height:38.10px;box-sizing:border-box;background:#e6f3fd;border:1.6px solid #3d7fae;border-radius:0 8px 8px 0;"></div>
<div style="position:absolute;left:591.50px;top:1071.80px;font-family:'Liberation Sans', sans-serif;font-size:20px;line-height:20px;font-weight:400;color:#17181c;white-space:nowrap;-webkit-text-stroke:0.3px #17181c;letter-spacing:0.243px;">Positions</div>
<div style="position:absolute;left:699.25px;top:1071.80px;font-family:'Liberation Sans', sans-serif;font-size:20px;line-height:20px;font-weight:400;color:#17181c;white-space:nowrap;-webkit-text-stroke:0.3px #17181c;letter-spacing:0.571px;">Estimated traffic</div>
<div style="position:absolute;left:876.75px;top:1071.80px;font-family:'Liberation Sans', sans-serif;font-size:20px;line-height:20px;font-weight:400;color:#17181c;white-space:nowrap;-webkit-text-stroke:0.3px #17181c;letter-spacing:0.342px;">Visibility</div>
<div style="position:absolute;left:977.00px;top:1071.80px;font-family:'Liberation Sans', sans-serif;font-size:20px;line-height:20px;font-weight:400;color:#17181c;white-space:nowrap;-webkit-text-stroke:0.3px #17181c;letter-spacing:0.369px;">All for yourdomain.com</div>
<div style="position:absolute;left:11.00px;top:1129.20px;width:1574.00px;height:59.20px;box-sizing:border-box;background:#f4f4f8;"></div>
<div style="position:absolute;left:726.30px;top:1129.20px;width:141.70px;height:59.20px;box-sizing:border-box;background:#e6e6ee;"></div>
<div style="position:absolute;left:618.90px;top:1129.70px;width:1.20px;height:470.30px;box-sizing:border-box;background:#e3e4ea;"></div>
<div style="position:absolute;left:937.40px;top:1129.70px;width:1.20px;height:470.30px;box-sizing:border-box;background:#e3e4ea;"></div>
<div style="position:absolute;left:1119.40px;top:1129.70px;width:1.20px;height:470.30px;box-sizing:border-box;background:#e3e4ea;"></div>
<div style="position:absolute;left:1348.90px;top:1129.70px;width:1.20px;height:470.30px;box-sizing:border-box;background:#e3e4ea;"></div>
<div style="position:absolute;left:11.00px;top:1187.80px;width:1574.00px;height:1.20px;box-sizing:border-box;background:#e3e4ea;"></div>
<div style="position:absolute;left:73.30px;top:1149.30px;width:21.30px;height:21.30px;box-sizing:border-box;background:#fff;border:1.5px solid #b6b9c1;border-radius:5px;"></div>
<div style="position:absolute;left:117.00px;top:1149.00px;font-family:'Liberation Sans', sans-serif;font-size:17.5px;line-height:17.5px;font-weight:400;color:#17181c;white-space:nowrap;letter-spacing:0.108px;">Keyword</div>
<div style="position:absolute;left:396.00px;top:1149.00px;font-family:'Liberation Sans', sans-serif;font-size:17.5px;line-height:17.5px;font-weight:400;color:#17181c;white-space:nowrap;letter-spacing:0.416px;">Intent</div>
<div style="position:absolute;left:489.40px;top:1149.00px;font-family:'Liberation Sans', sans-serif;font-size:17.5px;line-height:17.5px;font-weight:400;color:#17181c;white-space:nowrap;transform:scaleX(0.8928);transform-origin:0 0;">SF</div>
<div style="position:absolute;left:551.57px;top:1149.00px;font-family:'Liberation Sans', sans-serif;font-size:17.5px;line-height:17.5px;font-weight:400;color:#17181c;white-space:nowrap;transform:scaleX(0.9265);transform-origin:0 0;">KD %</div>
<div style="position:absolute;left:631.00px;top:1149.00px;font-family:'Liberation Sans', sans-serif;font-size:17.5px;line-height:17.5px;font-weight:400;color:#17181c;white-space:nowrap;letter-spacing:-0.235px;">Pos. Nov 1</div>
<div style="position:absolute;left:736.00px;top:1149.00px;font-family:'Liberation Sans', sans-serif;font-size:17.5px;line-height:17.5px;font-weight:400;color:#17181c;white-space:nowrap;letter-spacing:0.071px;">Pos. Jan 29</div>
<div style="position:absolute;left:897.40px;top:1149.00px;font-family:'Liberation Sans', sans-serif;font-size:17.5px;line-height:17.5px;font-weight:400;color:#17181c;white-space:nowrap;letter-spacing:0.709px;">Diff</div>
<div style="position:absolute;left:954.40px;top:1149.00px;font-family:'Liberation Sans', sans-serif;font-size:17.5px;line-height:17.5px;font-weight:400;color:#17181c;white-space:nowrap;letter-spacing:0.134px;">Visibility</div>
<div style="position:absolute;left:1079.30px;top:1149.00px;font-family:'Liberation Sans', sans-serif;font-size:17.5px;line-height:17.5px;font-weight:400;color:#17181c;white-space:nowrap;letter-spacing:0.809px;">Diff</div>
<div style="position:absolute;left:1141.80px;top:1149.00px;font-family:'Liberation Sans', sans-serif;font-size:17.5px;line-height:17.5px;font-weight:400;color:#17181c;white-space:nowrap;letter-spacing:0.325px;">Est. traffic</div>
<div style="position:absolute;left:1309.00px;top:1149.00px;font-family:'Liberation Sans', sans-serif;font-size:17.5px;line-height:17.5px;font-weight:400;color:#17181c;white-space:nowrap;letter-spacing:0.509px;">Diff</div>
<div style="position:absolute;left:1436.90px;top:1149.00px;font-family:'Liberation Sans', sans-serif;font-size:17.5px;line-height:17.5px;font-weight:400;color:#17181c;white-space:nowrap;letter-spacing:-0.276px;">Vol.</div>
<div style="position:absolute;left:1500.60px;top:1149.00px;font-family:'Liberation Sans', sans-serif;font-size:17.5px;line-height:17.5px;font-weight:400;color:#17181c;white-space:nowrap;transform:scaleX(0.9309);transform-origin:0 0;">CPC</div>
<div style="position:absolute;left:1557.40px;top:1149.00px;font-family:'Liberation Sans', sans-serif;font-size:17.5px;line-height:17.5px;font-weight:400;color:#17181c;white-space:nowrap;">URL</div>
<svg style="position:absolute;left:837.80px;top:1148.50px;overflow:visible;" width="17" height="15" viewBox="0 0 17 15"><path d="M1,2 H5 M1,7.3 H10 M1,12.6 H16" stroke="#8a8d96" stroke-width="2.2"/></svg>
<div style="position:absolute;left:392.00px;top:1179.70px;width:712.00px;height:8.00px;box-sizing:border-box;background:rgba(118,120,132,0.6);border-radius:4px;"></div>
<svg style="position:absolute;left:45.80px;top:1213.70px;overflow:visible;" width="10" height="13" viewBox="0 0 10 13"><polyline points="2,1.6 7.6,6.5 2,11.4" fill="none" stroke="#5f626b" stroke-width="2.6" stroke-linecap="round" stroke-linejoin="round"/></svg>
<div style="position:absolute;left:73.30px;top:1209.60px;width:21.30px;height:21.30px;box-sizing:border-box;background:#fff;border:1.5px solid #b6b9c1;border-radius:5px;"></div>
<div style="position:absolute;left:117.00px;top:1210.40px;font-family:'Liberation Sans', sans-serif;font-size:20px;line-height:20px;font-weight:400;color:#2a6aa9;white-space:nowrap;-webkit-text-stroke:0.12px #2a6aa9;letter-spacing:0.395px;">high yield savings account</div>
<div style="position:absolute;left:397.00px;top:1209.70px;width:22.00px;height:21.00px;box-sizing:border-box;background:#fcd87a;border-radius:5px;"></div>
<div style="position:absolute;left:402.30px;top:1213.00px;font-family:'Liberation Sans', sans-serif;font-size:16px;line-height:16px;font-weight:700;color:#8a5800;white-space:nowrap;">C</div>
<svg style="position:absolute;left:471.00px;top:1211.20px;overflow:visible;" width="21" height="18" viewBox="0 0 21 18"><path d="M1.3,17 V1.3 H19.8 V6" fill="none" stroke="#a3a6ae" stroke-width="2.6"/><rect x="0" y="0" width="21" height="3.4" fill="#a3a6ae"/><path d="M1.3,16.7 H8" fill="none" stroke="#a3a6ae" stroke-width="2.6"/><circle cx="14.2" cy="11.6" r="3.4" fill="none" stroke="#a3a6ae" stroke-width="2.4"/><path d="M16.6,14.2 L19.4,16.9" stroke="#a3a6ae" stroke-width="2.6" stroke-linecap="round"/></svg>
<div style="position:absolute;left:503.20px;top:1206.20px;width:1.30px;height:28.00px;box-sizing:border-box;background:#d4d6dc;"></div>
<div style="position:absolute;left:517.30px;top:1210.40px;font-family:'Liberation Sans', sans-serif;font-size:20px;line-height:20px;font-weight:400;color:#6b6e78;white-space:nowrap;-webkit-text-stroke:0.12px #6b6e78;">5</div>
<svg style="position:absolute;left:515.50px;top:1232.40px;overflow:visible;" width="13" height="2" viewBox="0 0 13 2"><path d="M0,1 H4.5 M8.5,1 H13" stroke="#8a8d96" stroke-width="1.4"/></svg>
<div style="position:absolute;left:562.00px;top:1210.40px;font-family:'Liberation Sans', sans-serif;font-size:20px;line-height:20px;font-weight:400;color:#17181c;white-space:nowrap;-webkit-text-stroke:0.12px #17181c;letter-spacing:0.677px;">99</div>
<div style="position:absolute;left:591.3px;top:1212.1px;width:16.3px;height:16.3px;border-radius:50%;background:#d0012f;"></div>
<svg style="position:absolute;left:677.60px;top:1214.00px;overflow:visible;" width="22" height="13" viewBox="0 0 22 13"><path d="M8.2,1.5 H6.3 A5,5 0 0 0 6.3,11.5 H8.2 M13.8,1.5 H15.7 A5,5 0 0 1 15.7,11.5 H13.8 M7,6.5 H15" fill="none" stroke="#a3a6ae" stroke-width="2.5" stroke-linecap="round"/></svg>
<div style="position:absolute;left:705.00px;top:1210.40px;font-family:'Liberation Sans', sans-serif;font-size:20px;line-height:20px;font-weight:400;color:#17181c;white-space:nowrap;-webkit-text-stroke:0.12px #17181c;">1</div>
<svg style="position:absolute;left:820.60px;top:1214.00px;overflow:visible;" width="22" height="13" viewBox="0 0 22 13"><path d="M8.2,1.5 H6.3 A5,5 0 0 0 6.3,11.5 H8.2 M13.8,1.5 H15.7 A5,5 0 0 1 15.7,11.5 H13.8 M7,6.5 H15" fill="none" stroke="#a3a6ae" stroke-width="2.5" stroke-linecap="round"/></svg>
<div style="position:absolute;left:848.00px;top:1210.40px;font-family:'Liberation Sans', sans-serif;font-size:20px;line-height:20px;font-weight:400;color:#17181c;white-space:nowrap;-webkit-text-stroke:0.12px #17181c;">1</div>
<div style="position:absolute;left:915.00px;top:1210.40px;font-family:'Liberation Sans', sans-serif;font-size:20px;line-height:20px;font-weight:400;color:#8a8d96;white-space:nowrap;-webkit-text-stroke:0.12px #8a8d96;">0</div>
<div style="position:absolute;left:965.06px;top:1210.40px;font-family:'Liberation Sans', sans-serif;font-size:20px;line-height:20px;font-weight:400;color:#17181c;white-space:nowrap;-webkit-text-stroke:0.12px #17181c;transform:scaleX(0.9441);transform-origin:0 0;">12.5%</div>
<div style="position:absolute;left:1097.20px;top:1210.40px;font-family:'Liberation Sans', sans-serif;font-size:20px;line-height:20px;font-weight:400;color:#8a8d96;white-space:nowrap;-webkit-text-stroke:0.12px #8a8d96;">0</div>
<div style="position:absolute;left:1142.80px;top:1210.40px;font-family:'Liberation Sans', sans-serif;font-size:20px;line-height:20px;font-weight:400;color:#17181c;white-space:nowrap;-webkit-text-stroke:0.12px #17181c;letter-spacing:0.382px;">4,465.07</div>
<div style="position:absolute;left:1326.60px;top:1210.40px;font-family:'Liberation Sans', sans-serif;font-size:20px;line-height:20px;font-weight:400;color:#8a8d96;white-space:nowrap;-webkit-text-stroke:0.12px #8a8d96;">0</div>
<div style="position:absolute;left:1388.00px;top:1210.40px;font-family:'Liberation Sans', sans-serif;font-size:20px;line-height:20px;font-weight:400;color:#17181c;white-space:nowrap;-webkit-text-stroke:0.12px #17181c;letter-spacing:0.638px;">368,000</div>
<div style="position:absolute;left:1495.30px;top:1210.40px;font-family:'Liberation Sans', sans-serif;font-size:20px;line-height:20px;font-weight:400;color:#17181c;white-space:nowrap;-webkit-text-stroke:0.12px #17181c;letter-spacing:-0.118px;">5.98</div>
<div style="position:absolute;left:1556.80px;top:1210.40px;font-family:'Liberation Sans', sans-serif;font-size:20px;line-height:20px;font-weight:400;color:#2a6aa9;white-space:nowrap;-webkit-text-stroke:0.12px #2a6aa9;letter-spacing:1.660px;">htt</div>
<div style="position:absolute;left:11.00px;top:1281.20px;width:1574.00px;height:1.20px;box-sizing:border-box;background:#e3e4ea;"></div>
<svg style="position:absolute;left:45.80px;top:1307.10px;overflow:visible;" width="10" height="13" viewBox="0 0 10 13"><polyline points="2,1.6 7.6,6.5 2,11.4" fill="none" stroke="#5f626b" stroke-width="2.6" stroke-linecap="round" stroke-linejoin="round"/></svg>
<div style="position:absolute;left:73.30px;top:1303.00px;width:21.30px;height:21.30px;box-sizing:border-box;background:#fff;border:1.5px solid #b6b9c1;border-radius:5px;"></div>
<div style="position:absolute;left:117.00px;top:1302.20px;font-family:'Liberation Sans', sans-serif;font-size:20px;line-height:20px;font-weight:400;color:#2a6aa9;white-space:nowrap;-webkit-text-stroke:0.12px #2a6aa9;letter-spacing:0.402px;">how much house can i</div>
<div style="position:absolute;left:118.00px;top:1325.50px;font-family:'Liberation Sans', sans-serif;font-size:20px;line-height:20px;font-weight:400;color:#2a6aa9;white-space:nowrap;-webkit-text-stroke:0.12px #2a6aa9;letter-spacing:0.868px;">afford</div>
<div style="position:absolute;left:397.00px;top:1303.10px;width:22.00px;height:21.00px;box-sizing:border-box;background:#c7e5fb;border-radius:5px;"></div>
<div style="position:absolute;left:407.00px;top:1309.10px;width:2.20px;height:9.00px;box-sizing:border-box;background:#0a5aa5;border-radius:0.5px;"></div>
<svg style="position:absolute;left:471.00px;top:1304.60px;overflow:visible;" width="21" height="18" viewBox="0 0 21 18"><path d="M1.3,17 V1.3 H19.8 V6" fill="none" stroke="#a3a6ae" stroke-width="2.6"/><rect x="0" y="0" width="21" height="3.4" fill="#a3a6ae"/><path d="M1.3,16.7 H8" fill="none" stroke="#a3a6ae" stroke-width="2.6"/><circle cx="14.2" cy="11.6" r="3.4" fill="none" stroke="#a3a6ae" stroke-width="2.4"/><path d="M16.6,14.2 L19.4,16.9" stroke="#a3a6ae" stroke-width="2.6" stroke-linecap="round"/></svg>
<div style="position:absolute;left:503.20px;top:1299.60px;width:1.30px;height:28.00px;box-sizing:border-box;background:#d4d6dc;"></div>
<div style="position:absolute;left:516.50px;top:1303.80px;font-family:'Liberation Sans', sans-serif;font-size:20px;line-height:20px;font-weight:400;color:#6b6e78;white-space:nowrap;-webkit-text-stroke:0.12px #6b6e78;">4</div>
<svg style="position:absolute;left:515.50px;top:1325.80px;overflow:visible;" width="13" height="2" viewBox="0 0 13 2"><path d="M0,1 H4.5 M8.5,1 H13" stroke="#8a8d96" stroke-width="1.4"/></svg>
<div style="position:absolute;left:563.20px;top:1303.80px;font-family:'Liberation Sans', sans-serif;font-size:20px;line-height:20px;font-weight:400;color:#17181c;white-space:nowrap;-webkit-text-stroke:0.12px #17181c;transform:scaleX(0.9764);transform-origin:0 0;">97</div>
<div style="position:absolute;left:591.3px;top:1305.5px;width:16.3px;height:16.3px;border-radius:50%;background:#d0012f;"></div>
<svg style="position:absolute;left:677.60px;top:1307.40px;overflow:visible;" width="22" height="13" viewBox="0 0 22 13"><path d="M8.2,1.5 H6.3 A5,5 0 0 0 6.3,11.5 H8.2 M13.8,1.5 H15.7 A5,5 0 0 1 15.7,11.5 H13.8 M7,6.5 H15" fill="none" stroke="#a3a6ae" stroke-width="2.5" stroke-linecap="round"/></svg>
<div style="position:absolute;left:705.00px;top:1303.80px;font-family:'Liberation Sans', sans-serif;font-size:20px;line-height:20px;font-weight:400;color:#17181c;white-space:nowrap;-webkit-text-stroke:0.12px #17181c;">1</div>
<svg style="position:absolute;left:820.60px;top:1307.40px;overflow:visible;" width="22" height="13" viewBox="0 0 22 13"><path d="M8.2,1.5 H6.3 A5,5 0 0 0 6.3,11.5 H8.2 M13.8,1.5 H15.7 A5,5 0 0 1 15.7,11.5 H13.8 M7,6.5 H15" fill="none" stroke="#a3a6ae" stroke-width="2.5" stroke-linecap="round"/></svg>
<div style="position:absolute;left:848.00px;top:1303.80px;font-family:'Liberation Sans', sans-serif;font-size:20px;line-height:20px;font-weight:400;color:#17181c;white-space:nowrap;-webkit-text-stroke:0.12px #17181c;">1</div>
<div style="position:absolute;left:915.00px;top:1303.80px;font-family:'Liberation Sans', sans-serif;font-size:20px;line-height:20px;font-weight:400;color:#8a8d96;white-space:nowrap;-webkit-text-stroke:0.12px #8a8d96;">0</div>
<div style="position:absolute;left:965.06px;top:1303.80px;font-family:'Liberation Sans', sans-serif;font-size:20px;line-height:20px;font-weight:400;color:#17181c;white-space:nowrap;-webkit-text-stroke:0.12px #17181c;transform:scaleX(0.9441);transform-origin:0 0;">12.5%</div>
<div style="position:absolute;left:1097.20px;top:1303.80px;font-family:'Liberation Sans', sans-serif;font-size:20px;line-height:20px;font-weight:400;color:#8a8d96;white-space:nowrap;-webkit-text-stroke:0.12px #8a8d96;">0</div>
<div style="position:absolute;left:1141.00px;top:1303.80px;font-family:'Liberation Sans', sans-serif;font-size:20px;line-height:20px;font-weight:400;color:#17181c;white-space:nowrap;-webkit-text-stroke:0.12px #17181c;letter-spacing:0.639px;">2,984.80</div>
<div style="position:absolute;left:1326.60px;top:1303.80px;font-family:'Liberation Sans', sans-serif;font-size:20px;line-height:20px;font-weight:400;color:#8a8d96;white-space:nowrap;-webkit-text-stroke:0.12px #8a8d96;">0</div>
<div style="position:absolute;left:1387.00px;top:1303.80px;font-family:'Liberation Sans', sans-serif;font-size:20px;line-height:20px;font-weight:400;color:#17181c;white-space:nowrap;-webkit-text-stroke:0.12px #17181c;letter-spacing:0.805px;">246,000</div>
<div style="position:absolute;left:1497.46px;top:1303.80px;font-family:'Liberation Sans', sans-serif;font-size:20px;line-height:20px;font-weight:400;color:#17181c;white-space:nowrap;-webkit-text-stroke:0.12px #17181c;transform:scaleX(0.9351);transform-origin:0 0;">1.47</div>
<div style="position:absolute;left:1556.80px;top:1303.80px;font-family:'Liberation Sans', sans-serif;font-size:20px;line-height:20px;font-weight:400;color:#2a6aa9;white-space:nowrap;-webkit-text-stroke:0.12px #2a6aa9;letter-spacing:1.660px;">htt</div>
<div style="position:absolute;left:11.00px;top:1394.90px;width:1574.00px;height:1.20px;box-sizing:border-box;background:#e3e4ea;"></div>
<svg style="position:absolute;left:45.80px;top:1420.80px;overflow:visible;" width="10" height="13" viewBox="0 0 10 13"><polyline points="2,1.6 7.6,6.5 2,11.4" fill="none" stroke="#5f626b" stroke-width="2.6" stroke-linecap="round" stroke-linejoin="round"/></svg>
<div style="position:absolute;left:73.30px;top:1416.70px;width:21.30px;height:21.30px;box-sizing:border-box;background:#fff;border:1.5px solid #b6b9c1;border-radius:5px;"></div>
<div style="position:absolute;left:118.00px;top:1415.90px;font-family:'Liberation Sans', sans-serif;font-size:20px;line-height:20px;font-weight:400;color:#2a6aa9;white-space:nowrap;-webkit-text-stroke:0.12px #2a6aa9;letter-spacing:0.463px;">compound interest</div>
<div style="position:absolute;left:118.00px;top:1439.20px;font-family:'Liberation Sans', sans-serif;font-size:20px;line-height:20px;font-weight:400;color:#2a6aa9;white-space:nowrap;-webkit-text-stroke:0.12px #2a6aa9;letter-spacing:0.363px;">calculator</div>
<div style="position:absolute;left:397.00px;top:1416.80px;width:22.00px;height:21.00px;box-sizing:border-box;background:#fcd87a;border-radius:5px;"></div>
<div style="position:absolute;left:402.30px;top:1420.10px;font-family:'Liberation Sans', sans-serif;font-size:16px;line-height:16px;font-weight:700;color:#8a5800;white-space:nowrap;">C</div>
<svg style="position:absolute;left:471.00px;top:1418.30px;overflow:visible;" width="21" height="18" viewBox="0 0 21 18"><path d="M1.3,17 V1.3 H19.8 V6" fill="none" stroke="#a3a6ae" stroke-width="2.6"/><rect x="0" y="0" width="21" height="3.4" fill="#a3a6ae"/><path d="M1.3,16.7 H8" fill="none" stroke="#a3a6ae" stroke-width="2.6"/><circle cx="14.2" cy="11.6" r="3.4" fill="none" stroke="#a3a6ae" stroke-width="2.4"/><path d="M16.6,14.2 L19.4,16.9" stroke="#a3a6ae" stroke-width="2.6" stroke-linecap="round"/></svg>
<div style="position:absolute;left:503.20px;top:1413.30px;width:1.30px;height:28.00px;box-sizing:border-box;background:#d4d6dc;"></div>
<div style="position:absolute;left:516.50px;top:1417.50px;font-family:'Liberation Sans', sans-serif;font-size:20px;line-height:20px;font-weight:400;color:#6b6e78;white-space:nowrap;-webkit-text-stroke:0.12px #6b6e78;">3</div>
<svg style="position:absolute;left:515.50px;top:1439.50px;overflow:visible;" width="13" height="2" viewBox="0 0 13 2"><path d="M0,1 H4.5 M8.5,1 H13" stroke="#8a8d96" stroke-width="1.4"/></svg>
<div style="position:absolute;left:562.00px;top:1417.50px;font-family:'Liberation Sans', sans-serif;font-size:20px;line-height:20px;font-weight:400;color:#17181c;white-space:nowrap;-webkit-text-stroke:0.12px #17181c;letter-spacing:0.677px;">82</div>
<div style="position:absolute;left:591.3px;top:1419.2px;width:16.3px;height:16.3px;border-radius:50%;background:#f4515b;"></div>
<div style="position:absolute;left:703.50px;top:1417.50px;font-family:'Liberation Sans', sans-serif;font-size:20px;line-height:20px;font-weight:400;color:#17181c;white-space:nowrap;-webkit-text-stroke:0.12px #17181c;">3</div>
<div style="position:absolute;left:845.50px;top:1417.50px;font-family:'Liberation Sans', sans-serif;font-size:20px;line-height:20px;font-weight:400;color:#17181c;white-space:nowrap;-webkit-text-stroke:0.12px #17181c;">2</div>
<svg style="position:absolute;left:901.00px;top:1420.30px;overflow:visible;" width="12" height="15" viewBox="0 0 12 15"><path d="M6,14 V2 M1.5,6.3 L6,1.6 L10.5,6.3" fill="none" stroke="#23906d" stroke-width="1.8" stroke-linecap="round" stroke-linejoin="round"/></svg>
<div style="position:absolute;left:915.00px;top:1417.50px;font-family:'Liberation Sans', sans-serif;font-size:20px;line-height:20px;font-weight:400;color:#23906d;white-space:nowrap;-webkit-text-stroke:0.12px #23906d;">1</div>
<div style="position:absolute;left:951.20px;top:1417.50px;font-family:'Liberation Sans', sans-serif;font-size:20px;line-height:20px;font-weight:400;color:#17181c;white-space:nowrap;-webkit-text-stroke:0.12px #17181c;letter-spacing:-0.090px;">4.293%</div>
<div style="position:absolute;left:1058.80px;top:1417.50px;font-family:'Liberation Sans', sans-serif;font-size:20px;line-height:20px;font-weight:400;color:#23906d;white-space:nowrap;-webkit-text-stroke:0.12px #23906d;letter-spacing:-0.321px;">+1.03</div>
<div style="position:absolute;left:1145.80px;top:1417.50px;font-family:'Liberation Sans', sans-serif;font-size:20px;line-height:20px;font-weight:400;color:#17181c;white-space:nowrap;-webkit-text-stroke:0.12px #17181c;letter-spacing:-0.047px;">1,875.00</div>
<div style="position:absolute;left:1260.00px;top:1417.50px;font-family:'Liberation Sans', sans-serif;font-size:20px;line-height:20px;font-weight:400;color:#23906d;white-space:nowrap;-webkit-text-stroke:0.12px #23906d;letter-spacing:0.645px;">+450.00</div>
<div style="position:absolute;left:1388.00px;top:1417.50px;font-family:'Liberation Sans', sans-serif;font-size:20px;line-height:20px;font-weight:400;color:#17181c;white-space:nowrap;-webkit-text-stroke:0.12px #17181c;letter-spacing:0.638px;">450,000</div>
<div style="position:absolute;left:1496.25px;top:1417.50px;font-family:'Liberation Sans', sans-serif;font-size:20px;line-height:20px;font-weight:400;color:#17181c;white-space:nowrap;-webkit-text-stroke:0.12px #17181c;transform:scaleX(0.9664);transform-origin:0 0;">0.74</div>
<div style="position:absolute;left:1556.80px;top:1417.50px;font-family:'Liberation Sans', sans-serif;font-size:20px;line-height:20px;font-weight:400;color:#2a6aa9;white-space:nowrap;-webkit-text-stroke:0.12px #2a6aa9;letter-spacing:1.660px;">htt</div>
<div style="position:absolute;left:11.00px;top:1508.90px;width:1574.00px;height:1.20px;box-sizing:border-box;background:#e3e4ea;"></div>
<svg style="position:absolute;left:45.80px;top:1534.80px;overflow:visible;" width="10" height="13" viewBox="0 0 10 13"><polyline points="2,1.6 7.6,6.5 2,11.4" fill="none" stroke="#5f626b" stroke-width="2.6" stroke-linecap="round" stroke-linejoin="round"/></svg>
<div style="position:absolute;left:73.30px;top:1530.70px;width:21.30px;height:21.30px;box-sizing:border-box;background:#fff;border:1.5px solid #b6b9c1;border-radius:5px;"></div>
<div style="position:absolute;left:117.00px;top:1531.50px;font-family:'Liberation Sans', sans-serif;font-size:20px;line-height:20px;font-weight:400;color:#2a6aa9;white-space:nowrap;-webkit-text-stroke:0.12px #2a6aa9;letter-spacing:0.545px;">mortgage calculator</div>
<div style="position:absolute;left:397.00px;top:1530.80px;width:22.00px;height:21.00px;box-sizing:border-box;background:#c7e5fb;border-radius:5px;"></div>
<div style="position:absolute;left:407.00px;top:1536.80px;width:2.20px;height:9.00px;box-sizing:border-box;background:#0a5aa5;border-radius:0.5px;"></div>
<svg style="position:absolute;left:471.00px;top:1532.30px;overflow:visible;" width="21" height="18" viewBox="0 0 21 18"><path d="M1.3,17 V1.3 H19.8 V6" fill="none" stroke="#a3a6ae" stroke-width="2.6"/><rect x="0" y="0" width="21" height="3.4" fill="#a3a6ae"/><path d="M1.3,16.7 H8" fill="none" stroke="#a3a6ae" stroke-width="2.6"/><circle cx="14.2" cy="11.6" r="3.4" fill="none" stroke="#a3a6ae" stroke-width="2.4"/><path d="M16.6,14.2 L19.4,16.9" stroke="#a3a6ae" stroke-width="2.6" stroke-linecap="round"/></svg>
<div style="position:absolute;left:503.20px;top:1527.30px;width:1.30px;height:28.00px;box-sizing:border-box;background:#d4d6dc;"></div>
<div style="position:absolute;left:516.50px;top:1531.50px;font-family:'Liberation Sans', sans-serif;font-size:20px;line-height:20px;font-weight:400;color:#6b6e78;white-space:nowrap;-webkit-text-stroke:0.12px #6b6e78;">4</div>
<svg style="position:absolute;left:515.50px;top:1553.50px;overflow:visible;" width="13" height="2" viewBox="0 0 13 2"><path d="M0,1 H4.5 M8.5,1 H13" stroke="#8a8d96" stroke-width="1.4"/></svg>
<div style="position:absolute;left:551.80px;top:1531.50px;font-family:'Liberation Sans', sans-serif;font-size:20px;line-height:20px;font-weight:400;color:#17181c;white-space:nowrap;-webkit-text-stroke:0.12px #17181c;letter-spacing:-0.123px;">100</div>
<div style="position:absolute;left:591.3px;top:1533.2px;width:16.3px;height:16.3px;border-radius:50%;background:#d0012f;"></div>
<div style="position:absolute;left:703.50px;top:1531.50px;font-family:'Liberation Sans', sans-serif;font-size:20px;line-height:20px;font-weight:400;color:#17181c;white-space:nowrap;-webkit-text-stroke:0.12px #17181c;">4</div>
<div style="position:absolute;left:846.50px;top:1531.50px;font-family:'Liberation Sans', sans-serif;font-size:20px;line-height:20px;font-weight:400;color:#17181c;white-space:nowrap;-webkit-text-stroke:0.12px #17181c;">3</div>
<svg style="position:absolute;left:901.00px;top:1534.30px;overflow:visible;" width="12" height="15" viewBox="0 0 12 15"><path d="M6,14 V2 M1.5,6.3 L6,1.6 L10.5,6.3" fill="none" stroke="#23906d" stroke-width="1.8" stroke-linecap="round" stroke-linejoin="round"/></svg>
<div style="position:absolute;left:915.00px;top:1531.50px;font-family:'Liberation Sans', sans-serif;font-size:20px;line-height:20px;font-weight:400;color:#23906d;white-space:nowrap;-webkit-text-stroke:0.12px #23906d;">1</div>
<div style="position:absolute;left:952.00px;top:1531.50px;font-family:'Liberation Sans', sans-serif;font-size:20px;line-height:20px;font-weight:400;color:#17181c;white-space:nowrap;-webkit-text-stroke:0.12px #17181c;letter-spacing:-0.250px;">3.262%</div>
<div style="position:absolute;left:1043.20px;top:1531.50px;font-family:'Liberation Sans', sans-serif;font-size:20px;line-height:20px;font-weight:400;color:#23906d;white-space:nowrap;-webkit-text-stroke:0.12px #23906d;letter-spacing:0.639px;">+0.549</div>
<div style="position:absolute;left:1131.80px;top:1531.50px;font-family:'Liberation Sans', sans-serif;font-size:20px;line-height:20px;font-weight:400;color:#17181c;white-space:nowrap;-webkit-text-stroke:0.12px #17181c;letter-spacing:0.319px;">10,608.33</div>
<div style="position:absolute;left:1249.40px;top:1531.50px;font-family:'Liberation Sans', sans-serif;font-size:20px;line-height:20px;font-weight:400;color:#23906d;white-space:nowrap;-webkit-text-stroke:0.12px #23906d;letter-spacing:-0.276px;">+1,786.67</div>
<div style="position:absolute;left:1371.90px;top:1531.50px;font-family:'Liberation Sans', sans-serif;font-size:20px;line-height:20px;font-weight:400;color:#17181c;white-space:nowrap;-webkit-text-stroke:0.12px #17181c;letter-spacing:0.406px;">3,350,000</div>
<div style="position:absolute;left:1501.67px;top:1531.50px;font-family:'Liberation Sans', sans-serif;font-size:20px;line-height:20px;font-weight:400;color:#17181c;white-space:nowrap;-webkit-text-stroke:0.12px #17181c;transform:scaleX(0.8267);transform-origin:0 0;">1.19</div>
<div style="position:absolute;left:1556.80px;top:1531.50px;font-family:'Liberation Sans', sans-serif;font-size:20px;line-height:20px;font-weight:400;color:#2a6aa9;white-space:nowrap;-webkit-text-stroke:0.12px #2a6aa9;letter-spacing:1.660px;">htt</div>
<div style="position:absolute;left:1572.00px;top:1129.70px;width:13.00px;height:454.30px;box-sizing:border-box;background:linear-gradient(90deg, rgba(0,0,0,0), rgba(0,0,0,0.05));"></div>
<div style="position:absolute;left:1585.60px;top:960.00px;width:14.40px;height:624.00px;box-sizing:border-box;background:#f4f4f8;"></div>
<div style="position:absolute;left:1585.00px;top:1129.70px;width:1.20px;height:454.30px;box-sizing:border-box;background:#e1e2e8;"></div></body></html>
